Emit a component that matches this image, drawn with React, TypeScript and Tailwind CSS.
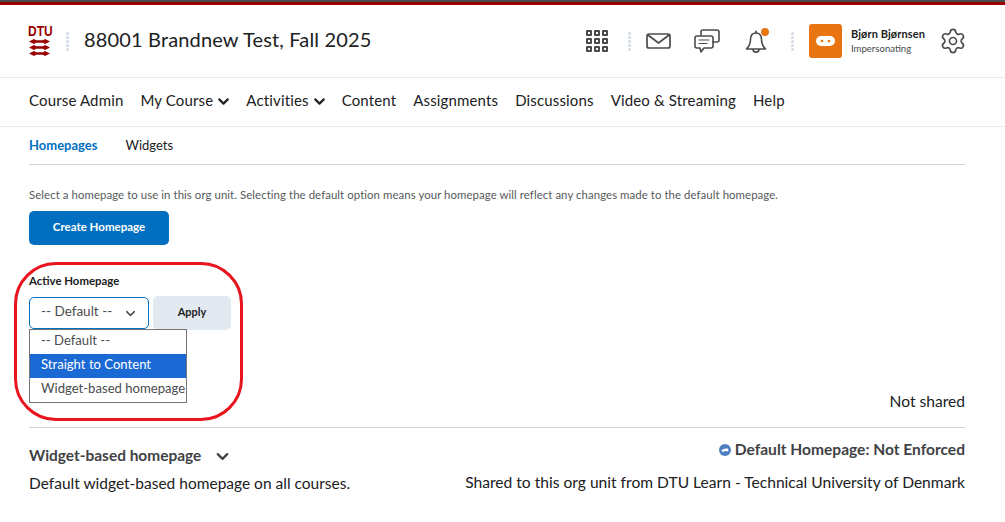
import { ChevronDown, Settings } from 'lucide-react';

function Dots() {
  return (
    <div className="flex flex-col gap-[1px]">
      {[0, 1, 2, 3, 4].map((i) => (
        <span key={i} className="w-[3px] h-[3px] rounded-full bg-[#d3dbe5]" />
      ))}
    </div>
  );
}

function DtuLogo() {
  return (
    <div className="w-[22px] flex flex-col items-center -mt-[2px]">
      <span className="font-['Liberation_Sans',sans-serif] text-[15px] leading-[13px] scale-x-[0.8] text-[#990000] font-bold">DTU</span>
      <svg width="22" height="17" viewBox="0 0 22 17" className="mt-[2px]" fill="#990000">
        <path d="M0 2.5 L5 0 L7 1.2 H14 L16 0 L21 2.5 L16 5 L14 3.8 H7 L5 5 Z" />
        <path d="M0 8.5 L5 6 L7 7.2 H14 L16 6 L21 8.5 L16 11 L14 9.8 H7 L5 11 Z" />
        <path d="M0 14.5 L5 12 L7 13.2 H14 L16 12 L21 14.5 L16 17 L14 15.8 H7 L5 17 Z" />
      </svg>
    </div>
  );
}

function GridIcon() {
  return (
    <div className="grid grid-cols-3 gap-[2px]">
      {[0, 1, 2, 3, 4, 5, 6, 7, 8].map((i) => (
        <span key={i} className="w-[6px] h-[6px] rounded-[1px] border-2 border-[#494c4e]" />
      ))}
    </div>
  );
}

function MailIcon() {
  return (
    <svg width="25" height="16" viewBox="0 0 25 16" fill="none" stroke="#494c4e" strokeWidth="1.7" strokeLinejoin="round" strokeLinecap="round">
      <rect x="1" y="1" width="23" height="14" rx="2" />
      <path d="M2 2 L12.5 10 L23 2" />
    </svg>
  );
}

function ChatIcon() {
  return (
    <svg width="26" height="25" viewBox="0 0 26 25" fill="none" stroke="#494c4e" strokeWidth="1.6" strokeLinejoin="round" strokeLinecap="round">
      <path d="M7 6 V3 Q7 1 9 1 H23 Q25 1 25 3 V11 Q25 13 23 13 H19" />
      <path d="M3 7 H17 Q19 7 19 9 V17 Q19 19 17 19 H10 L7 23 L6 19 H3 Q1 19 1 17 V9 Q1 7 3 7 Z" />
      <path d="M5 11 H15 M5 14.5 H13" strokeWidth="1.2" />
    </svg>
  );
}

function BellIcon() {
  return (
    <div className="relative w-[24px] h-[26px]">
      <svg width="22" height="24" viewBox="0 0 22 24" className="absolute left-0 top-[2px]" fill="none" stroke="#494c4e" strokeWidth="1.6" strokeLinejoin="round" strokeLinecap="round">
        <path d="M11 3 C7 3 5.5 6 5.5 9.5 C5.5 14 4 16.5 1.5 19 H20.5 C18 16.5 16.5 14 16.5 9.5 C16.5 6 15 3 11 3 Z" />
        <path d="M11 3 V1.2" />
        <path d="M8 19.5 C8 23 14 23 14 19.5" />
      </svg>
      <span className="absolute right-0 top-0 w-[8px] h-[8px] rounded-full bg-[#e87511]" />
    </div>
  );
}

function NavLink({ label, caret }: { label: string; caret?: boolean }) {
  return (
    <div className="flex items-center gap-[2px]">
      <span>{label}</span>
      {caret && <ChevronDown size={17} strokeWidth={3} className="text-[#202122] mt-[2px] -mr-[3px]" />}
    </div>
  );
}

export default function App() {
  return (
    <div className="relative w-[1005px] h-[522px] overflow-hidden bg-white text-[#202122] font-['Lato','Liberation_Sans',sans-serif]">
      <div className="h-[2px] bg-[#494c4e]" />
      <div className="h-[3px] bg-[#990000]" />

      <header className="h-[72px] flex items-center justify-between pl-[29px] pr-[40px] border-b border-[#e6eaf0] box-content">
        <div className="flex items-center">
          <DtuLogo />
          <div className="ml-[15px] mr-[15px]"><Dots /></div>
          <span className="text-[20px] leading-[26px] tracking-[0.15px] -mt-[4px]">88001 Brandnew Test, Fall 2025</span>
        </div>
        <div className="flex items-center">
          <GridIcon />
          <div className="ml-[20px] mr-[15px]"><Dots /></div>
          <MailIcon />
          <div className="ml-[23px]"><ChatIcon /></div>
          <div className="ml-[25px]"><BellIcon /></div>
          <div className="ml-[22px] mr-[15px]"><Dots /></div>
          <div className="w-[33px] h-[34px] rounded-[3px] bg-[#e87511] flex items-center justify-center">
            <svg width="19" height="10" viewBox="0 0 19 10">
              <rect x="0" y="0" width="19" height="10" rx="5" fill="#fff" />
              <circle cx="6" cy="5" r="1.3" fill="#e87511" />
              <circle cx="13" cy="5" r="1.3" fill="#e87511" />
            </svg>
          </div>
          <div className="ml-[9px] flex flex-col -mt-[1px]">
            <span className="text-[11px] leading-[15px] font-bold tracking-[0.1px]">Bjørn Bjørnsen</span>
            <span className="text-[9.6px] leading-[15px] text-[#494c4e]">Impersonating</span>
          </div>
          <Settings size={28} strokeWidth={1.4} className="ml-[14px] -mr-[2px] text-[#494c4e]" />
        </div>
      </header>

      <nav className="h-[44px] pb-[4px] flex items-center gap-[17px] pl-[29px] border-b border-[#e6eaf0] box-content text-[15px] leading-[20px] tracking-[0.15px]">
        <NavLink label="Course Admin" />
        <NavLink label="My Course" caret />
        <NavLink label="Activities" caret />
        <NavLink label="Content" />
        <NavLink label="Assignments" />
        <NavLink label="Discussions" />
        <NavLink label="Video & Streaming" />
        <NavLink label="Help" />
      </nav>

      <main className="px-[40px] pl-[29px]">
        <div className="h-[37px] flex items-center gap-[28px] border-b border-[#cdd5dc] text-[13px] box-content">
          <span className="font-bold text-[#006fbf]">Homepages</span>
          <span>Widgets</span>
        </div>

        <p className="mt-[23px] text-[11.4px] leading-[14px] text-[#565a5c] tracking-[0.07px] whitespace-nowrap">
          Select a homepage to use in this org unit. Selecting the default option means your homepage will reflect any changes made to the default homepage.
        </p>

        <button className="mt-[9px] block w-[140px] h-[34px] pb-[2px] rounded-[5px] bg-[#006fbf] text-white text-[11.5px] font-bold">
          Create Homepage
        </button>

        <div className="mt-[29px] text-[11.4px] leading-[14px] font-bold">Active Homepage</div>

        <div className="relative mt-[8px] flex items-center gap-[4px]">
          <div className="w-[120px] h-[32px] rounded-[5px] border border-[#006fbf] flex items-center justify-between pl-[11px] pr-[10px] text-[13.5px] text-[#494c4e]">
            <span className="-mt-[3px]">-- Default --</span>
            <ChevronDown size={15} strokeWidth={2.4} />
          </div>
          <button className="w-[78px] h-[34px] pb-[2px] rounded-[5px] bg-[#e3e9f1] text-[11px] font-bold">Apply</button>
          <div className="absolute left-0 top-[33px] w-[158px] h-[74px] bg-white border border-[#767676] text-[13.1px] text-[#494c4e] z-10">
            <div className="h-[24px] leading-[21px] pl-[11px]">-- Default --</div>
            <div className="h-[24px] leading-[21px] pl-[11px] bg-[#1a69d4] text-white">Straight to Content</div>
            <div className="h-[24px] leading-[21px] pl-[11px] whitespace-nowrap">Widget-based homepage</div>
          </div>
        </div>

        <div className="mt-[61px] text-right text-[15.6px] leading-[20px]">Not shared</div>
        <div className="mt-[16px] border-t border-[#cdd5dc]" />

        <div className="flex justify-between items-start mt-[11px]">
          <div>
            <div className="flex items-center h-[20px] mt-[6px] text-[15.45px] leading-[20px] font-bold text-[#3f4245]">
              <span>Widget-based homepage</span>
              <ChevronDown size={19} strokeWidth={2.8} className="ml-[12px] mt-[2px]" />
            </div>
            <div className="mt-[8px] text-[15.5px] leading-[20px]">Default widget-based homepage on all courses.</div>
          </div>
          <div className="flex flex-col items-end">
            <div className="flex items-center gap-[4px] text-[15.55px] leading-[20px] font-bold text-[#3f4245]">
              <svg width="12" height="12" viewBox="0 0 13 13" className="mt-[2px]">
                <circle cx="6.5" cy="6.5" r="6.5" fill="#4f7fc0" />
                <path d="M2.5 7 Q5 4 10 5 V8 Q6 7 4.5 9 Z" fill="#fff" />
              </svg>
              <span>Default Homepage: Not Enforced</span>
            </div>
            <div className="mt-[13px] text-[15.6px] leading-[20px] whitespace-nowrap">Shared to this org unit from DTU Learn - Technical University of Denmark</div>
          </div>
        </div>
      </main>

      <div className="absolute left-[14px] top-[262px] w-[229px] h-[159px] rounded-[42px] border-[3px] border-[#e8141e] pointer-events-none z-20" />
    </div>
  );
}
